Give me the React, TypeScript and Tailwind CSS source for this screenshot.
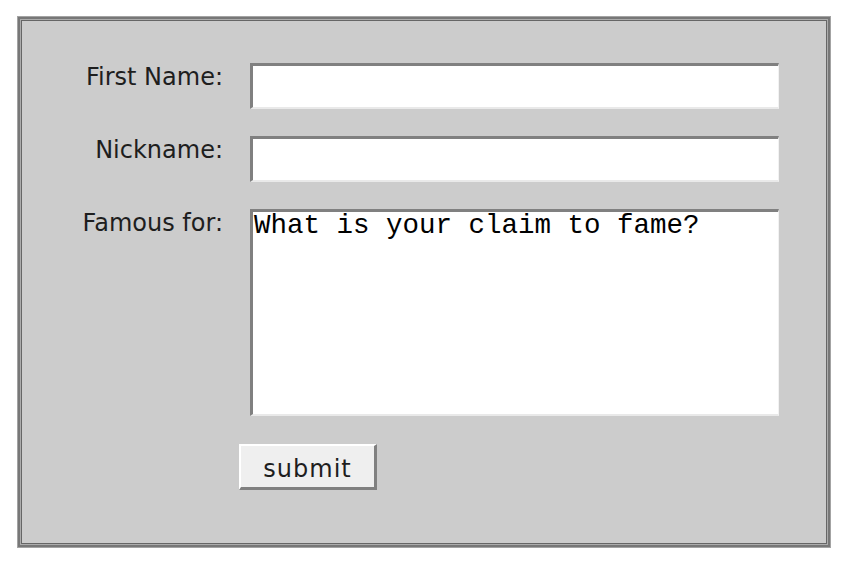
const labelClass =
  "text-right text-[24px] leading-[28px] text-[#1e1e1e] font-['DejaVu_Sans',sans-serif]";

const fieldClass =
  "block w-[529px] bg-white border-t-[3px] border-l-[3px] border-t-[#808080] border-l-[#808080] border-b-2 border-b-[#e9e9e9] border-r border-r-[#f2f2f2] outline-none";

export default function App() {
  return (
    <div className="min-h-[571px] bg-white pt-[16px] pl-[17px]">
      <div className="w-[814px] h-[532px] border border-[#a3a3a3]">
        <div className="h-full border-2 border-[#777]">
          <div className="h-full border border-[#acacac]">
            <div className="h-full border border-[#666] bg-[#cccccc] pt-[42px]">
              <form
                className="grid grid-cols-[201px_529px] gap-x-[27px] gap-y-[27px]"
                onSubmit={(e) => e.preventDefault()}
              >
                <label className={labelClass}>First Name:</label>
                <input type="text" className={`${fieldClass} h-[46px]`} />

                <label className={labelClass}>Nickname:</label>
                <input type="text" className={`${fieldClass} h-[46px]`} />

                <label className={labelClass}>Famous for:</label>
                <textarea
                  className={`${fieldClass} h-[207px] resize-none pl-[1px] pt-0 text-[27.5px] leading-[28px] text-black font-['Liberation_Mono',monospace]`}
                  defaultValue="What is your claim to fame?"
                />

                <div className="col-start-2 -ml-[11px] mt-[1px]">
                  <button
                    type="submit"
                    className="flex h-[46px] w-[138px] items-center justify-center bg-[#efefef] border-t-2 border-l-2 border-t-white border-l-white border-b-[3px] border-r-[3px] border-b-[#808080] border-r-[#808080] pt-[4px] text-[24px] leading-[28px] tracking-[1px] text-[#1e1e1e] font-['DejaVu_Sans',sans-serif]"
                  >
                    submit
                  </button>
                </div>
              </form>
            </div>
          </div>
        </div>
      </div>
    </div>
  );
}
